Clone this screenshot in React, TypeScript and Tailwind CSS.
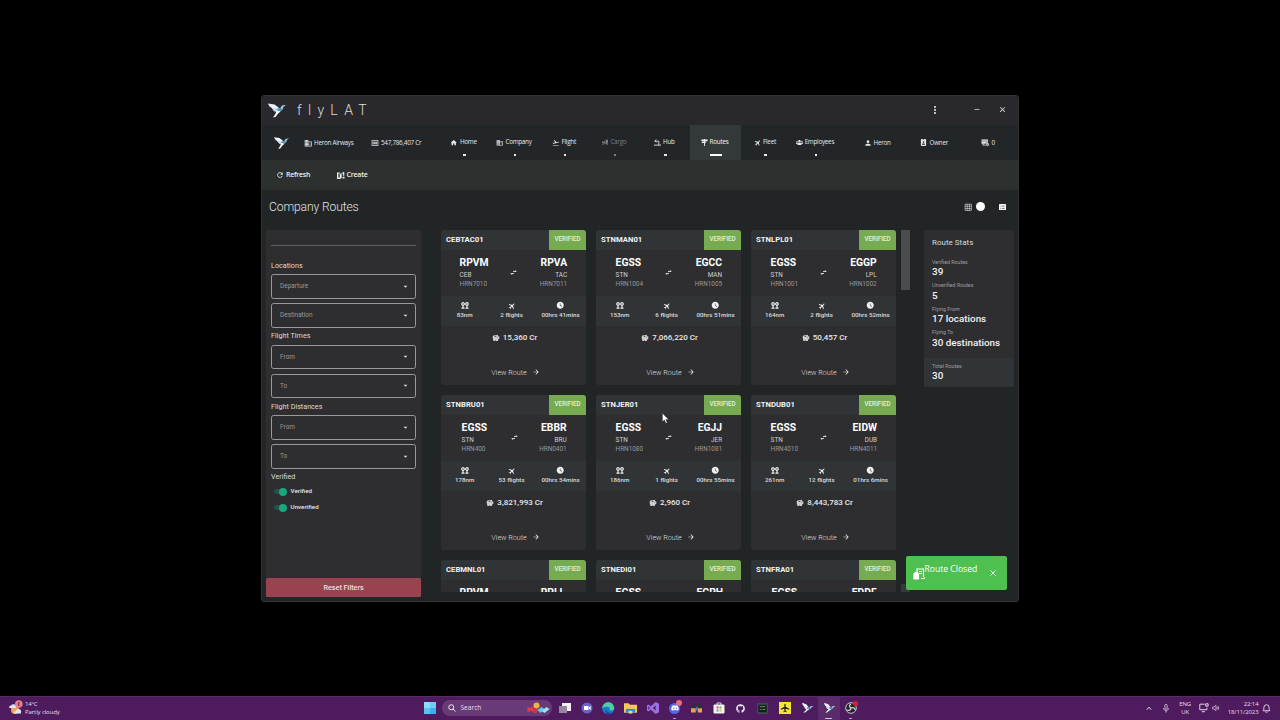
import type { ReactNode } from "react";
import {
  MdAirplanemodeActive, MdArrowDropDown, MdArrowForward, MdBusiness, MdClose,
  MdFlightTakeoff, MdGridOn, MdHome, MdMoney, MdMoreVert, MdPerson,
  MdRefresh, MdSavings, MdWatchLater, MdMinimize,
} from "react-icons/md";
import { FaGithub, FaDiscord, FaIdBadge, FaTruckLoading, FaUsers } from "react-icons/fa";

const ui = "font-['Open_Sans','Noto_Sans',sans-serif]";

function Bird({ className }: { className?: string }) {
  return (
    <svg viewBox="0 0 18 14.500" className={className}>
      <path d="M0 .3 6.500 1.200 11.500 5 9.500 8.300 6.200 8 3.800 4.800 1.500 3.300Z" fill="#eef3f6" />
      <path d="M3.800 4.800 8 5 9.500 8.300 6.200 8Z" fill="#cbdae3" />
      <path d="M8.500 5.500 11.500 4.800 14 4.300 15.200 5.500 13 8 9.500 9.500Z" fill="#5797bf" />
      <path d="M12.500 4.500 14 2.300 18 1.500 15.200 4 14.500 6.200Z" fill="#a9c9db" />
      <path d="M8.500 7 12.500 8.300 10 10.500 7.500 13.800 5 14.300 7.500 10.500Z" fill="#f3f7fa" />
    </svg>
  );
}

function HubIcon() {
  return (
    <svg viewBox="0 0 16 16" className="size-[7px]" fill="none" stroke="currentColor" strokeWidth="2">
      <path d="M2 5h9v9M5 1 2 5l3 3M0 14h16" />
    </svg>
  );
}

function Signpost() {
  return (
    <svg viewBox="0 0 16 16" className="size-[7px]" fill="currentColor">
      <path d="M7 0h2v1h6v4H9v1h2v3H9v7H7V9H3L1 7.500 3 6h4V5H2L0 3l2-2h5z" />
    </svg>
  );
}

function MapPlus() {
  return (
    <svg viewBox="0 0 16 16" className="size-[7.5px]" fill="currentColor">
      <path d="M0 1h6v2H3v9l3-1V3l4 1v9l-4 2-6 1zM10 1h2v3h-2zM13 0h2.500v8H13zM12 10h4v4h-4z" />
    </svg>
  );
}

function Inbox() {
  return (
    <svg viewBox="0 0 18 16" className="h-[7.500px] w-[8.500px]">
      <path d="M1 1h14v9H1z" fill="currentColor" />
      <path d="M1 4.500h14" stroke="#3c4042" strokeWidth="1.200" />
      <path d="M4 13h6M4 10v3" stroke="currentColor" strokeWidth="1.800" />
      <circle cx="13.500" cy="11.500" r="3.800" fill="currentColor" stroke="#222629" />
      <path d="m11.800 11.500 1.300 1.300 2.200-2.400" fill="none" stroke="#222629" strokeWidth="1.200" />
    </svg>
  );
}

function ListBox() {
  return (
    <svg viewBox="0 0 12 11" className="h-[6.500px] w-[7px]">
      <rect width="12" height="11" rx="1" fill="#f4f4f4" />
      <path d="M2.500 3.500h1.500M5.500 3.500h4M2.500 7.500h1.500M5.500 7.500h4" stroke="#44484a" strokeWidth="1.300" />
    </svg>
  );
}

function Pins() {
  return (
    <svg viewBox="0 0 18 16" className="h-[7px] w-[8px]" fill="none" stroke="currentColor" strokeWidth="2.600">
      <circle cx="4.500" cy="4.500" r="3" />
      <circle cx="13.500" cy="4.500" r="3" />
      <path d="M4.500 7v6M13.500 7v6M1 14h7M10 14h7" />
    </svg>
  );
}

function Swap() {
  return (
    <svg viewBox="0 0 14 10" className="h-[5px] w-[7px]" fill="none" stroke="#d5d6d7" strokeWidth="1.9">
      <path d="M6 3h6M10 .5 12.5 3M8 7H2M4 9.5 1.5 7" />
    </svg>
  );
}

type Tab = { label: string; icon: ReactNode; state?: "active" | "off" };
const tabs: Tab[] = [
  { label: "Home", icon: <MdHome className="size-[7.5px]" /> },
  { label: "Company", icon: <MdBusiness className="size-[7.5px]" /> },
  { label: "Flight", icon: <MdFlightTakeoff className="size-[7.5px]" /> },
  { label: "Cargo", icon: <FaTruckLoading className="size-[6.500px]" />, state: "off" },
  { label: "Hub", icon: <HubIcon /> },
  { label: "Routes", icon: <Signpost />, state: "active" },
  { label: "Fleet", icon: <MdAirplanemodeActive className="size-[7.500px] rotate-45" /> },
  { label: "Employees", icon: <FaUsers className="size-[7px]" /> },
];

function NavTab({ label, icon, state }: Tab) {
  return (
    <div
      className={
        "flex w-[50.2px] flex-col items-center " +
        (state === "active" ? "bg-[#33383b] text-[#f1f2f2]" : state === "off" ? "text-[#7b7e80]" : "text-[#e6e8e9]")
      }
    >
      <div className="flex h-[34px] items-center gap-[2px] pt-px pr-[2px] whitespace-nowrap">
        {icon}
        <span>{label}</span>
      </div>
      <div className={"-mt-[5px] h-[1.5px] " + (state === "active" ? "w-[12px] bg-white" : "w-[2.5px] bg-current")} />
    </div>
  );
}

function Select({ label, className }: { label: string; className?: string }) {
  return (
    <div
      className={
        "flex h-[24.500px] w-[145px] shrink-0 items-center justify-between rounded-[2.5px] border border-[#98999b] pr-[5px] pl-[8px] text-[6.4px] text-[#98999b] " +
        (className ?? "")
      }
    >
      <span>{label}</span>
      <MdArrowDropDown className="size-[9px] text-[#e3e3e3]" />
    </div>
  );
}

function FilterLabel({ children }: { children: ReactNode }) {
  return <div className="flex h-[17px] shrink-0 items-center text-[7.2px] text-[#dcdcdd]">{children}</div>;
}

function Toggle({ label }: { label: string }) {
  return (
    <div className="flex h-[16px] items-center pl-[3px] text-[6.2px] font-medium text-[#e6e6e7]">
      <div className="flex h-[4.5px] w-[13px] items-center justify-end rounded-full bg-[#245348]">
        <div className="size-[8px] shrink-0 rounded-full bg-[#1aa57c]" />
      </div>
      <span className="ml-[3.5px]">{label}</span>
    </div>
  );
}

type Details = { fi: string; ti: string; ff: string; tf: string; dist: string; flights: string; time: string; money: string };
type Route = { id: string; from: string; to: string; pad: string; details?: Details };
const routes: Route[] = [
  { id: "CEBTAC01", from: "RPVM", to: "RPVA", pad: "pl-[18.5px] pr-[19px]", details: { fi: "CEB", ti: "TAC", ff: "HRN7010", tf: "HRN7011", dist: "83nm", flights: "2 flights", time: "00hrs 41mins", money: "15,360 Cr" } },
  { id: "STNMAN01", from: "EGSS", to: "EGCC", pad: "pl-[19.5px] pr-[19px]", details: { fi: "STN", ti: "MAN", ff: "HRN1004", tf: "HRN1005", dist: "153nm", flights: "6 flights", time: "00hrs 51mins", money: "7,066,220 Cr" } },
  { id: "STNLPL01", from: "EGSS", to: "EGGP", pad: "pl-[19.5px] pr-[19.5px]", details: { fi: "STN", ti: "LPL", ff: "HRN1001", tf: "HRN1002", dist: "164nm", flights: "2 flights", time: "00hrs 52mins", money: "50,457 Cr" } },
  { id: "STNBRU01", from: "EGSS", to: "EBBR", pad: "pl-[20.5px] pr-[19.5px]", details: { fi: "STN", ti: "BRU", ff: "HRN400", tf: "HRN0401", dist: "178nm", flights: "53 flights", time: "00hrs 54mins", money: "3,821,993 Cr" } },
  { id: "STNJER01", from: "EGSS", to: "EGJJ", pad: "pl-[19.5px] pr-[19px]", details: { fi: "STN", ti: "JER", ff: "HRN1080", tf: "HRN1081", dist: "186nm", flights: "1 flights", time: "00hrs 55mins", money: "2,960 Cr" } },
  { id: "STNDUB01", from: "EGSS", to: "EIDW", pad: "pl-[19.5px] pr-[19px]", details: { fi: "STN", ti: "DUB", ff: "HRN4010", tf: "HRN4011", dist: "261nm", flights: "12 flights", time: "01hrs 6mins", money: "8,443,783 Cr" } },
  { id: "CEBMNL01", from: "RPVM", to: "RPLL", pad: "pl-[18.5px] pr-[21px]" },
  { id: "STNEDI01", from: "EGSS", to: "EGPH", pad: "pl-[19.5px] pr-[18px]" },
  { id: "STNFRA01", from: "EGSS", to: "EDDF", pad: "pl-[20.5px] pr-[19.5px]" },
];

function Airport({ code, iata, flight, end }: { code: string; iata?: string; flight?: string; end?: boolean }) {
  return (
    <div className={"flex flex-col " + (end ? "items-end" : "items-start")}>
      <div className="flex h-[15px] items-center text-[10.3px] font-bold text-white">{code}</div>
      {iata && <div className="flex h-[8px] items-center text-[6.4px] text-[#cfcfd0]">{iata}</div>}
      {flight && <div className="flex h-[10px] items-center text-[6.4px] text-[#98989a]">{flight}</div>}
    </div>
  );
}

function Card({ r }: { r: Route }) {
  const d = r.details;
  return (
    <div className="flex h-[155px] w-[145px] flex-col overflow-hidden rounded-[3px] bg-[#2e2e30]">
      <div className="flex h-[20px] shrink-0 items-center justify-between bg-[#303436] pl-[5px]">
        <span className="pt-[0.500px] text-[7.700px] font-bold text-[#f3f3f3]">{r.id}</span>
        <span className="flex h-full w-[37px] items-center justify-center bg-[#77ab51] text-[6.3px] font-medium text-[#e4efdb]">
          VERIFIED
        </span>
      </div>
      <div className={"grid h-[46px] shrink-0 grid-cols-[1fr_auto_1fr] items-start pt-[6.500px] " + r.pad}>
        <Airport code={r.from} iata={d?.fi} flight={d?.ff} />
        <div className="flex h-[32px] items-center">{d && <Swap />}</div>
        <Airport code={r.to} iata={d?.ti} flight={d?.tf} end />
      </div>
      {d && (
        <>
          <div className="grid h-[30px] shrink-0 grid-cols-[47px_47px_51px] bg-[#303436] pt-[6px] text-[6.2px] font-medium text-[#dededf]">
            {[
              [<Pins key="i" />, d.dist] as const,
              [<MdAirplanemodeActive key="i" className="size-[8px] rotate-45" />, d.flights] as const,
              [<MdWatchLater key="i" className="size-[8.500px]" />, d.time] as const,
            ].map(([icon, text]) => (
              <div key={text} className="flex flex-col items-center whitespace-nowrap">
                <div className="flex h-[8px] items-center text-[#f0f0f0]">{icon}</div>
                <div className="flex h-[11px] items-center">{text}</div>
              </div>
            ))}
          </div>
          <div className="flex h-[25px] shrink-0 items-center justify-center gap-[3px] pl-[2px] text-[8px] font-medium text-[#e8e8e9]">
            <MdSavings className="size-[8px] text-[#cfcfd0]" />
            {d.money}
          </div>
          <div className="flex flex-1 items-end justify-center gap-[5px] pb-[8px] pl-[4px] text-[7.2px] font-light text-[#dededf]">
            <span className="leading-[9px]">View Route</span>
            <MdArrowForward className="mb-[0.5px] size-[8px] text-[#f0f0f0]" />
          </div>
        </>
      )}
    </div>
  );
}

function Stat({ label, value }: { label: string; value: string }) {
  return (
    <div className="flex h-[23.5px] shrink-0 flex-col pl-[8px]">
      <span className="flex h-[6px] items-center text-[5.3px] text-[#9d9ea0]">{label}</span>
      <span className="flex h-[13px] items-center text-[9.850px] font-medium whitespace-nowrap text-[#f2f2f3]">{value}</span>
    </div>
  );
}

function Taskbar() {
  const cell = "flex h-[24px] w-[22px] shrink-0 items-center justify-center";
  return (
    <div className={"flex h-[24px] items-center border-t border-[#5a2c66] bg-[#4d1b5e] pb-px text-[#e9dfec] " + ui}>
      <div className="flex w-[420.500px] items-center pl-[8px]">
        <svg viewBox="0 0 16 16" className="size-[16px]">
          <circle cx="7" cy="10" r="4" fill="#f0a35a" />
          <path d="M1 7.5a2 2 0 0 1 2-2 3 3 0 0 1 5 0v2.5H2zM6 13a2 2 0 0 1 2-2 2.5 2.5 0 0 1 5 1v1.5H7z" fill="#dbe6f8" />
          <circle cx="10.8" cy="4" r="3.8" fill="#ec7d8c" />
          <path d="M10.8 2v4" stroke="#5d2032" strokeWidth="1" />
        </svg>
        <div className="ml-px flex flex-col text-[6px] leading-[8px]">
          <span className="tracking-[-0.2px]">14°C</span>
          <span className="tracking-[-0.1px]">Partly cloudy</span>
        </div>
      </div>
      <div className="flex w-[21px] items-center pl-[3.5px]">
        <div className="grid size-[11.5px] grid-cols-2 gap-[0.5px]">
          <i className="bg-[#8adcf8]" /><i className="bg-[#69cdf5]" /><i className="bg-[#5cc3f1]" /><i className="bg-[#3db0ec]" />
        </div>
      </div>
      <div className="flex h-[16px] w-[110px] items-center rounded-full bg-[#683a77] pl-[6px]">
        <svg viewBox="0 0 16 16" className="size-[8px]" fill="none" stroke="#f1eaf3" strokeWidth="2">
          <circle cx="6.5" cy="6.5" r="5" /><path d="m10 10 5 5" />
        </svg>
        <span className="ml-[5px] text-[6.600px]">Search</span>
        <svg viewBox="0 0 24 12" className="mr-px ml-auto h-[12px] w-[25px]">
          <path d="M1 4.5 4 6l3-2v6L4 9 1 10z" fill="#e2394a" />
          <circle cx="10" cy="3.4" r="3" fill="#eeb348" />
          <path d="m6 7 3-1 3 2-2 3H7z" fill="#c73845" />
          <path d="m11 8 4-3 3 2-4 4z" fill="#69c7e9" /><path d="m15 9 5-4 3 2-5 4z" fill="#9fe0f2" />
        </svg>
      </div>
      <div className="flex pl-[2px]">
        <div className={cell}>
          <svg viewBox="0 0 12 12" className="size-[12px]"><path d="M3 1h9v8H3z" fill="#f3f0f4" /><path d="M0 4h8v7H0z" fill="#96859d" /></svg>
        </div>
        <div className={cell}>
          <svg viewBox="0 0 12 12" className="size-[12px]"><circle cx="6" cy="6" r="5.5" fill="#6a62c4" /><path d="M3 4h4.5v4H3zM8 5.3 9.7 4v4L8 6.7z" fill="#fff" /></svg>
        </div>
        <div className={cell}>
          <svg viewBox="0 0 12 12" className="size-[12.500px]"><circle cx="6" cy="6" r="5.8" fill="#1b78cf" /><path d="M.3 5A5.8 5.8 0 0 1 11.8 6c0 2-3 2.6-4.5 1.7C8 6.500 7 4.500 5 4.500 3 4.500 1 5 .3 6z" fill="#4bd0a4" /><path d="M4.500 6c-1 3 2 5 5.300 4A6 6 0 0 1 6 11.800C3.500 11.500 2.500 8 4.500 6" fill="#124f9e" /></svg>
        </div>
        <div className={cell}>
          <svg viewBox="0 0 14 12" className="h-[12px] w-[13px]"><path d="M0 1h5l1.500 1.500H14V11H0z" fill="#f7cb52" /><path d="M2 7h10v4H2z" fill="#3789cf" /><path d="M5 9h4v3H5z" fill="#f0d77b" /></svg>
        </div>
        <div className={cell}>
          <svg viewBox="0 0 14 14" className="size-[12px]"><path d="M10 0 14 2v10l-4 2-5.500-5L1.500 11 0 10.200V3.800L1.500 3l3 2zM10 4 7 7l3 3zM1.500 5v4l2-2z" fill="#9b6fe0" fillRule="evenodd" /></svg>
        </div>
        <div className={cell + " relative"}>
          <span className="flex size-[11px] items-center justify-center rounded-full bg-[#5865e8]"><FaDiscord className="size-[8px] text-white" /></span>
          <i className="absolute top-[4px] right-[3.5px] size-[6px] rounded-full bg-[#f06a78]" />
          <i className="absolute bottom-px h-[1.500px] w-[3px] rounded bg-[#bda6c5]" />
        </div>
        <div className={cell}>
          <svg viewBox="0 0 12 12" className="size-[11.500px]"><path d="M1 4h4v3H1zM7 4h4v3H7zM2 1h3v3H2zM7 1h3v3H7z" fill="#2b2f36" /><path d="M0 6.500h5V11H0zM7 6.500h5V11H7z" fill="#e5a24a" /><path d="M5 5h2v4H5z" fill="#3a7fb8" /></svg>
        </div>
        <div className={cell}>
          <svg viewBox="0 0 12 12" className="size-[12px]"><path d="M4 3V1h4v2" fill="none" stroke="#d3d8de" /><rect x=".5" y="2.500" width="11" height="9" rx="1" fill="#f2f4f6" /><path d="M3.500 4.500h2v2h-2z" fill="#e8563a" /><path d="M6.500 4.500h2v2h-2z" fill="#6fb242" /><path d="M3.500 7.500h2v2h-2z" fill="#3aa0e8" /><path d="M6.500 7.500h2v2h-2z" fill="#efb731" /></svg>
        </div>
        <div className={cell}><FaGithub className="size-[9px] text-[#efe8f1]" /></div>
        <div className={cell}>
          <svg viewBox="0 0 12 12" className="size-[11px]"><path d="M0 0h12v12H0z" fill="#3d4a50" /><path d="M1.500 2h9v8h-9z" fill="#151c1d" /><path d="M3 4h6M3 7h2m1 0h3" stroke="#6ba06f" /></svg>
        </div>
        <div className={cell}>
          <span className="flex size-[12px] items-center justify-center bg-[#f4e532]"><MdAirplanemodeActive className="size-[10px] text-[#222]" /></span>
        </div>
        <div className={cell}><Bird className="h-[11px] w-[12px] rotate-12" /></div>
        <div className={cell + " relative rounded-[2px] bg-[#5b2b6b]"}>
          <Bird className="h-[11px] w-[12px] rotate-12" />
          <i className="absolute bottom-px h-[1.500px] w-[7px] rounded bg-[#d9c6df]" />
        </div>
        <div className={cell + " relative"}>
          <svg viewBox="0 0 12 12" className="size-[12px]"><circle cx="6" cy="6" r="5.300" fill="#232126" stroke="#c9c6cb" /><path d="M6 6c-2-1-2-3 0-4M6 6c2-1 4 0 4 2M6 6c0 2-2 3-4 2" fill="none" stroke="#d4d1d6" strokeWidth="1.300" /></svg>
          <i className="absolute top-[4.500px] right-[4px] size-[5px] rounded-full bg-[#dc1f2d]" />
          <i className="absolute bottom-px h-[1.500px] w-[3px] rounded bg-[#bda6c5]" />
        </div>
      </div>
      <div className="ml-auto flex items-center pr-[9.500px] text-[6px] leading-[8px] tracking-[-0.100px]">
        <svg viewBox="0 0 8 6" className="mr-[11px] w-[6px]" fill="none" stroke="currentColor" strokeWidth="1.300"><path d="m1 5 3-3.500L7 5" /></svg>
        <svg viewBox="0 0 8 12" className="mr-[10px] h-[9px] w-[6px]" fill="none" stroke="currentColor"><rect x="2.500" y=".5" width="3" height="6.500" rx="1.500" /><path d="M.8 5.500c0 4.500 6.400 4.500 6.400 0M4 9v2.500" /></svg>
        <div className="mr-[8px] flex flex-col items-center"><span>ENG</span><span>UK</span></div>
        <svg viewBox="0 0 12 12" className="mr-[3px] size-[9.500px]" fill="none" stroke="currentColor" strokeWidth="1.200"><path d="M7 1.500H1v7h9V6M3.500 11h4M8.500 1h3v3h-3z" /></svg>
        <svg viewBox="0 0 12 12" className="mr-[8px] size-[8px]" fill="none" stroke="currentColor"><path d="M1 4.500h2L6 2v8L3 7.500H1zM7.500 4.500q1.200 1.500 0 3M9 3q2.500 3 0 6" /></svg>
        <div className="mr-[3px] flex flex-col items-end"><span>22:14</span><span>18/11/2023</span></div>
        <svg viewBox="0 0 12 12" className="size-[9px]" fill="none" stroke="currentColor" strokeWidth="1.200"><path d="M1.500 9h9L9.500 7V4.500a3.500 3.500 0 0 0-7 0V7zM4.500 10.500q1.500 1.200 3 0" /></svg>
      </div>
    </div>
  );
}

export default function App() {
  return (
    <div className="relative flex h-[720px] w-[1280px] flex-col overflow-hidden bg-black font-['Roboto',sans-serif] leading-none">
      <div className="flex flex-1 justify-center pt-[95px]">
        <div className="flex h-[507px] w-[758px] flex-col overflow-hidden rounded-[3px] border border-[#303234] bg-[#212526]">
          <div className="flex h-[29px] shrink-0 items-center bg-[#29282d] pl-[5.500px] text-[#dededf]">
            <Bird className="mb-px h-[15px] w-[18px]" />
            <span className="ml-[11.500px] pb-px text-[14px] font-light tracking-[6.300px]">flyLAT</span>
            <div className="ml-auto flex items-center pr-[11px] pb-[2px]">
              <MdMoreVert className="mr-[31px] size-[12px]" />
              <MdMinimize className="mr-[16px] mb-[7px] size-[10px]" />
              <MdClose className="size-[9px]" />
            </div>
          </div>
          <div className={"flex h-[34.5px] shrink-0 bg-[#222629] text-[6.300px] font-medium tracking-[-0.250px] text-[#e3e5e6] " + ui}>
            <div className="flex w-[177.500px] items-center pt-px pl-[12px] whitespace-nowrap">
              <Bird className="h-[12px] w-[15px]" />
              <MdBusiness className="mr-[2px] ml-[14.500px] size-[8.500px]" />
              <span>Heron Airways</span>
              <MdMoney className="mr-[2px] ml-[17.500px] size-[8px]" />
              <span>547,786,407 Cr</span>
            </div>
            {tabs.map((t) => (
              <NavTab key={t.label} {...t} />
            ))}
            <div className="flex flex-1 items-center pt-px pl-[22.500px]">
              <div className="flex w-[56px] items-center gap-[2px]"><MdPerson className="size-[8px]" />Heron</div>
              <div className="flex w-[61.500px] items-center gap-[3px]"><FaIdBadge className="size-[7px]" />Owner</div>
              <div className="flex items-center gap-[2px]"><Inbox />0</div>
            </div>
          </div>
          <div className={"flex h-[30px] shrink-0 items-center bg-[#2c302f] pt-[1.500px] pl-[14px] text-[6.900px] font-semibold text-[#f0f1f1] " + ui}>
            <div className="flex w-[61px] items-center gap-[2px] tracking-[-0.200px]"><MdRefresh className="size-[8px]" />Refresh</div>
            <div className="flex items-center gap-[2px] tracking-[-0.150px]"><MapPlus />Create</div>
          </div>
          <div className="flex h-[34px] shrink-0 items-center pt-[1.500px] pr-[12.500px] pl-[7px] text-[#e2e3e3]">
            <span className="text-[12.100px] font-light tracking-[-0.120px]">Company Routes</span>
            <MdGridOn className="ml-auto size-[8.500px] text-[#c5c6c6]" />
            <i className="mb-px ml-[4px] size-[9px] rounded-full bg-white" />
            <span className="mb-px ml-[13.500px]"><ListBox /></span>
          </div>
          <div className="flex flex-1 items-start pt-[6px] pl-[4.100px]">
            <div className="flex h-[367.500px] w-[155px] flex-col rounded-[2px] bg-[#2e2e30] shadow-[0_0_2px_#2e3233]">
              <div className="mx-[5px] h-[16px] shrink-0 border-b border-[#5f5e60]" />
              <div className="flex flex-1 flex-col pt-[11.500px] pl-[5px]">
                <FilterLabel>Locations</FilterLabel>
                <Select label="Departure" />
                <Select label="Destination" className="mt-[4.500px]" />
                <FilterLabel>Flight Times</FilterLabel>
                <Select label="From" />
                <Select label="To" className="mt-[4.500px]" />
                <FilterLabel>Flight Distances</FilterLabel>
                <Select label="From" />
                <Select label="To" className="mt-[4.500px]" />
                <FilterLabel>Verified</FilterLabel>
                <div className="-mt-[2px]">
                  <Toggle label="Verified" />
                  <Toggle label="Unverified" />
                </div>
              </div>
              <div className="flex h-[19px] shrink-0 items-center justify-center rounded-[1.500px] bg-[#9a4350] text-[7.200px] font-medium text-[#f0dfe1]">
                Reset Filters
              </div>
            </div>
            <div className="ml-[20px] grid h-[362px] w-[455px] grid-cols-3 content-start gap-[10px] overflow-hidden">
              {routes.map((r) => (
                <Card key={r.id} r={r} />
              ))}
            </div>
            <div className="ml-[5px] flex h-[362px] w-[9px] flex-col justify-between">
              <div className="h-[60px] bg-[#4a4c4d]" />
              <div className="h-[8px] bg-[#36393b]" />
            </div>
            <div className="ml-[14px] flex h-[157px] w-[90px] flex-col overflow-hidden rounded-[2px] bg-[#2e2e30]">
              <div className="flex h-[30px] shrink-0 items-center pb-[4px] pl-[8px] text-[8px] text-[#d9dadb]">Route Stats</div>
              <Stat label="Verified Routes" value="39" />
              <Stat label="Unverified Routes" value="5" />
              <Stat label="Flying From" value="17 locations" />
              <Stat label="Flying To" value="30 destinations" />
              <div className="mt-auto h-[29px] bg-[#303436] pt-[6px]">
                <Stat label="Total Routes" value="30" />
              </div>
            </div>
          </div>
        </div>
      </div>
      <Taskbar />
      <div className={"absolute top-[556px] left-[906px] flex h-[34px] w-[100.500px] items-center rounded-[2px] bg-[#4fbf50] pr-[10.500px] pl-[6.500px] text-white " + ui}>
        <svg viewBox="0 0 12 12" className="mt-[1px] size-[12px]" fill="none" stroke="currentColor" strokeWidth="1.200">
          <path d="M4 4V1h6.500v8M6 3.500h3M6 5.500h3M8 10.500h4V9" />
          <path d="M1 6h4.500v5H1zM2 6V4.500h2.500V6" fill="currentColor" />
        </svg>
        <span className="mb-[8px] text-[8.600px] font-medium whitespace-nowrap">Route Closed</span>
        <svg viewBox="0 0 8 8" className="ml-auto size-[6px]" stroke="currentColor" strokeWidth="1.200"><path d="m.5.5 7 7m0-7-7 7" /></svg>
      </div>
      <svg viewBox="0 0 10 16" className="absolute top-[413px] left-[662px] h-[11px] w-[7px]">
        <path d="M.5.5v12l3-2.500 2 5 2-1-2-4.500h4z" fill="#fff" stroke="#333" strokeWidth=".6" />
      </svg>
    </div>
  );
}
